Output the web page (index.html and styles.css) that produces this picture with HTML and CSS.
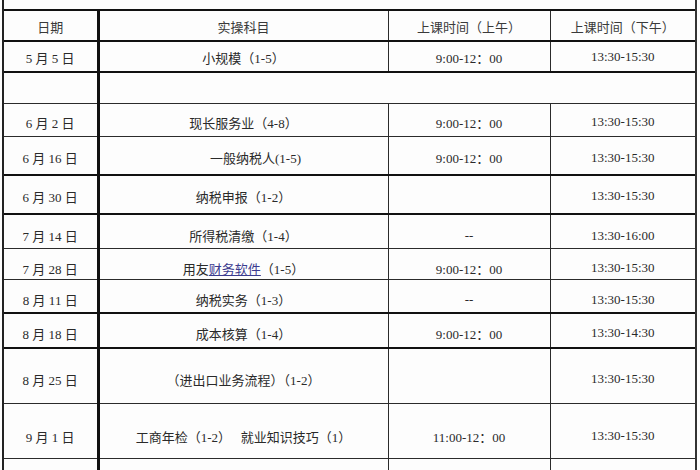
FILE: index.html
```html
<!DOCTYPE html>
<html lang="zh">
<head>
<meta charset="utf-8">
<title>实操课程安排</title>
<link rel="stylesheet" href="styles.css">
</head>
<body>
<table class="sched">
  <colgroup>
    <col class="c-date">
    <col class="c-subj">
    <col class="c-am">
    <col class="c-pm">
  </colgroup>
  <tr class="r-top"><td colspan="4"></td></tr>
  <tr class="r-head b-thick">
    <td>日期</td><td>实操科目</td><td>上课时间（上午）</td><td>上课时间（下午）</td>
  </tr>
  <tr class="r-0505 b-thick">
    <td>5 月 5 日</td><td>小规模（1-5）</td><td>9:00-12：00</td><td>13:30-15:30</td>
  </tr>
  <tr class="r-blank b-thick">
    <td></td><td colspan="3"></td>
  </tr>
  <tr class="r-0602">
    <td>6 月 2 日</td><td>现长服务业（4-8）</td><td>9:00-12：00</td><td>13:30-15:30</td>
  </tr>
  <tr class="r-0616">
    <td>6 月 16 日</td><td class="shift">一般纳税人(1-5)</td><td>9:00-12：00</td><td>13:30-15:30</td>
  </tr>
  <tr class="r-0630 b-thick">
    <td>6 月 30 日</td><td>纳税申报（1-2）</td><td></td><td>13:30-15:30</td>
  </tr>
  <tr class="r-0714 b-thick">
    <td>7 月 14 日</td><td>所得税清缴（1-4）</td><td>--</td><td>13:30-16:00</td>
  </tr>
  <tr class="r-0728">
    <td>7 月 28 日</td><td>用友<a class="lnk" href="#">财务软件</a>（1-5）</td><td>9:00-12：00</td><td>13:30-15:30</td>
  </tr>
  <tr class="r-0811">
    <td>8 月 11 日</td><td>纳税实务（1-3）</td><td>--</td><td>13:30-15:30</td>
  </tr>
  <tr class="r-0818 b-thick">
    <td>8 月 18 日</td><td>成本核算（1-4）</td><td>9:00-12：00</td><td>13:30-14:30</td>
  </tr>
  <tr class="r-0825 b-thick">
    <td>8 月 25 日</td><td>（进出口业务流程）（1-2）</td><td></td><td>13:30-15:30</td>
  </tr>
  <tr class="r-0901">
    <td>9 月 1 日</td><td>工商年检（1-2）&nbsp;&nbsp;&nbsp;就业知识技巧（1）</td><td>11:00-12：00</td><td>13:30-15:30</td>
  </tr>
  <tr class="r-end">
    <td></td><td></td><td></td><td></td>
  </tr>
</table>
</body>
</html>
```

FILE: styles.css
```css
html, body {
  margin: 0;
  padding: 0;
  background: #fdfdfd;
}

body {
  width: 700px;
  height: 470px;
  overflow: hidden;
  font-family: "Liberation Serif", "Noto Sans CJK SC", serif;
  font-size: 13px;
  color: #2a2a2a;
}

.sched {
  border-collapse: collapse;
  margin-left: 2px;
  table-layout: fixed;
  width: 693px;
}

.c-date { width: 95px; }
.c-subj { width: 290px; }
.c-am { width: 162px; }
.c-pm { width: 146px; }

.sched td {
  padding: 4px 0 0 0;
  text-align: center;
  vertical-align: middle;
  border: 1px solid #2b2b2b;
  white-space: nowrap;
}

.sched td:first-child {
  border-left: 2px solid #222;
  border-right: 3px solid #111;
}

.sched td:last-child {
  border-right: 2px solid #333;
}

.r-top td {
  border-top: none;
  border-right: 2px solid #333;
  height: 9px;
  padding: 0;
}

.b-thick td { border-top: 2px solid #111; }

.r-head td { height: 28px; padding-top: 1px; color: #3a3a3a; }
.r-0505 td { height: 28px; padding-top: 1px; }
.r-blank td { height: 29px; padding-top: 1px; }
.r-0602 td { height: 28px; }
.r-0616 td { height: 33px; }
.r-0630 td { height: 34px; padding-top: 3px; }
.r-0714 td { height: 25px; padding-top: 8px; }
.r-0728 td { height: 22px; padding-top: 8px; }
.r-0811 td { height: 25px; padding-top: 7px; }
.r-0818 td { height: 28px; padding-top: 5px; }
.r-0825 td { height: 48px; padding-top: 6px; }
.r-0901 td { height: 44px; padding-top: 10px; }
.r-end td { height: 20px; }

.shift { text-indent: 24px; }

.lnk {
  color: #3b3b8f;
  text-decoration: underline;
}
```
